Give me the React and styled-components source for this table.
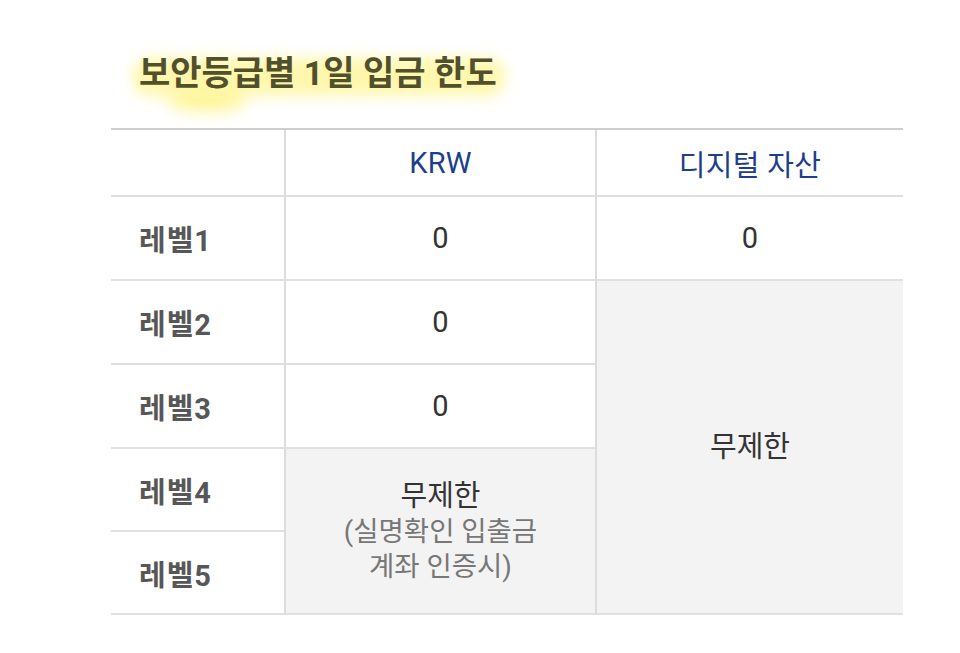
import React from "react";
import styled, { createGlobalStyle } from "styled-components";

const Global = createGlobalStyle`
  html, body { margin: 0; padding: 0; background: #ffffff; }
  body { font-family: Roboto, "Noto Sans CJK KR", sans-serif; }
`;

const Page = styled.div`
  padding: 50px 0 40px 111px;
`;

const Title = styled.h2`
  position: relative;
  display: inline-block;
  margin: 0 0 32px 28px;
  font-size: 34px;
  line-height: 46px;
  font-weight: 700;
  color: #50502c;
  z-index: 0;
  &::before {
    content: "";
    position: absolute;
    left: -6px;
    right: -8px;
    top: 8px;
    bottom: 0px;
    background: #fff7ad;
    filter: blur(7px);
    border-radius: 16px;
    z-index: -1;
  }
  &::after {
    content: "";
    position: absolute;
    left: 28px;
    width: 80px;
    top: 36px;
    height: 26px;
    background: #fff59a;
    filter: blur(8px);
    border-radius: 50%;
    z-index: -1;
  }
`;

const Table = styled.div`
  display: grid;
  width: 792px;
  grid-template-columns: 173px 311px 308px;
  grid-template-rows: 67px 84px 84px 84px 83px 83px;
  border-top: 2px solid #cfcfcf;
`;

const Cell = styled.div`
  box-sizing: border-box;
  display: flex;
  flex-direction: column;
  align-items: ${(p) => (p.$label ? "flex-start" : "center")};
  justify-content: center;
  padding-left: ${(p) => (p.$label ? "28px" : "0")};
  border-bottom: 2px solid #e0e0e0;
  border-left: ${(p) => (p.$label ? "none" : "2px solid #dcdcdc")};
  background: ${(p) => (p.$muted ? "#f3f3f3" : "#ffffff")};
  grid-row: ${(p) => p.$row || "auto"};
  grid-column: ${(p) => p.$col || "auto"};
  text-align: center;
`;

const HeadText = styled.span`
  font-size: 29px;
  color: #1d3f8b;
  font-weight: 400;
  letter-spacing: 0.3px;
`;

const LabelText = styled.span`
  font-size: 29px;
  font-weight: 700;
  color: #575757;
  letter-spacing: 1px;
`;

const ValueText = styled.span`
  font-size: 29px;
  color: #333333;
  line-height: 36px;
`;

const NoteText = styled.span`
  font-size: 27.5px;
  color: #777777;
  line-height: 35px;
`;

export default function App() {
  return (
    <>
      <Global />
      <Page>
        <Title>보안등급별 1일 입금 한도</Title>
        <Table>
          <Cell $label $row="1" $col="1" />
          <Cell $row="1" $col="2"><HeadText>KRW</HeadText></Cell>
          <Cell $row="1" $col="3"><HeadText>디지털 자산</HeadText></Cell>

          <Cell $label $row="2" $col="1"><LabelText>레벨1</LabelText></Cell>
          <Cell $row="2" $col="2"><ValueText>0</ValueText></Cell>
          <Cell $row="2" $col="3"><ValueText>0</ValueText></Cell>

          <Cell $label $row="3" $col="1"><LabelText>레벨2</LabelText></Cell>
          <Cell $row="3" $col="2"><ValueText>0</ValueText></Cell>
          <Cell $muted $row="3 / 7" $col="3"><ValueText>무제한</ValueText></Cell>

          <Cell $label $row="4" $col="1"><LabelText>레벨3</LabelText></Cell>
          <Cell $row="4" $col="2"><ValueText>0</ValueText></Cell>

          <Cell $label $row="5" $col="1"><LabelText>레벨4</LabelText></Cell>
          <Cell $muted $row="5 / 7" $col="2">
            <ValueText>무제한</ValueText>
            <NoteText>(실명확인 입출금</NoteText>
            <NoteText>계좌 인증시)</NoteText>
          </Cell>

          <Cell $label $row="6" $col="1"><LabelText>레벨5</LabelText></Cell>
        </Table>
      </Page>
    </>
  );
}
